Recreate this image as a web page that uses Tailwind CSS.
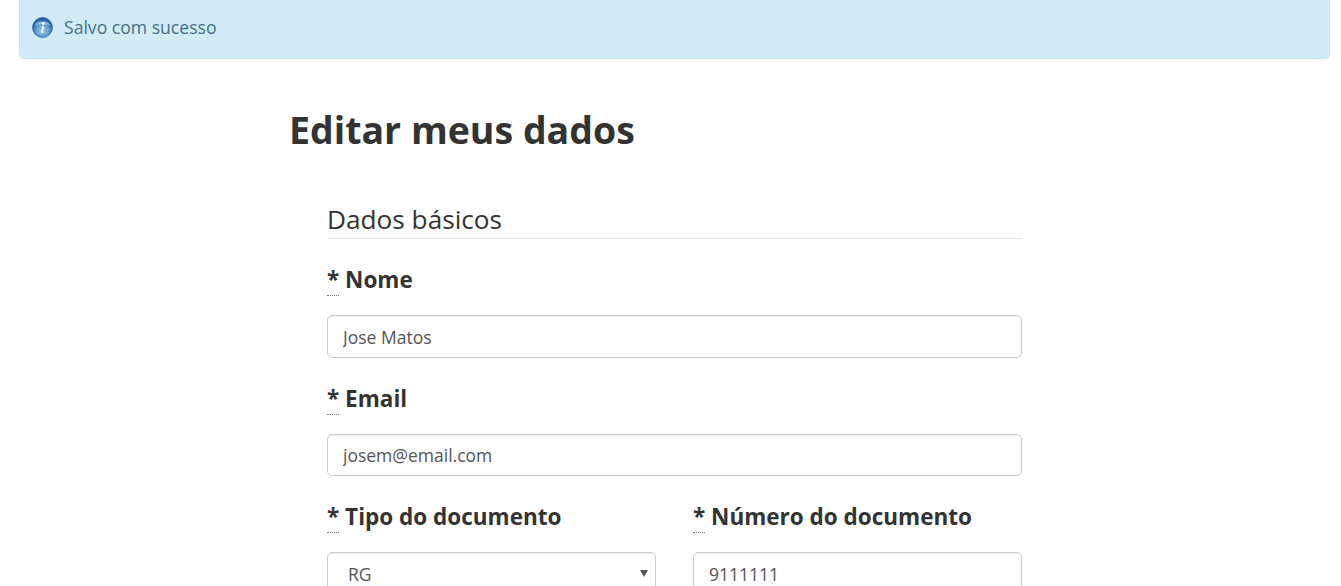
<!DOCTYPE html>
<html lang="pt">
<head>
<meta charset="utf-8">
<title>Editar meus dados</title>
<script src="https://cdn.jsdelivr.net/npm/@tailwindcss/browser@4"></script>
</head>
<body class="h-[586px] overflow-hidden bg-white font-['Open_Sans',sans-serif] text-[#333]">
<div class="ml-[19px] mr-[11px] flex h-[59px] items-center gap-[11px] rounded-b-[5px] border border-t-0 border-[#bce8f1] bg-[#d1ebf7] pl-[12px] pb-[3px] text-[17.6px] text-[#44708f]">
  <svg width="21" height="21" viewBox="0 0 21 21" class="shrink-0">
    <defs>
      <radialGradient id="g" cx="50%" cy="65%" r="60%"><stop offset="0" stop-color="#a5cdec"/><stop offset="0.55" stop-color="#5a9ad2"/><stop offset="1" stop-color="#1b5c9b"/></radialGradient>
    </defs>
    <circle cx="10.5" cy="10.5" r="10" fill="url(#g)" stroke="#2b6ca6" stroke-width=".8"/>
    <path d="M3 8.500C4.500 3 16.500 3 18 8.500 14 6.800 7 6.800 3 8.500Z" fill="#fff" fill-opacity=".4"/>
    <circle cx="11.300" cy="6.500" r="1.400" fill="#fff"/>
    <path d="M9.500 9.300h2.500l-1.100 5.700h1l-.3 1H9l1.100-5.700h-.9Z" fill="#fff"/>
  </svg>
  <span>Salvo com sucesso</span>
</div>
<main class="ml-[290px] w-[732px]">
  <h1 class="mt-[45px] -ml-px text-[37.5px] leading-[52px] font-bold">Editar meus dados</h1>
  <form class="mt-[45px] pl-[37px]">
    <h2 class="border-b border-[#e5e5e5] pb-[1px] text-[26.2px] leading-[36px]">Dados básicos</h2>
    <div class="mt-[25px] h-[118.5px]">
      <label class="block text-[22.5px] leading-[32px] font-bold"><abbr class="border-b border-dotted border-[#777] no-underline" title="obrigatório">*</abbr> Nome</label>
      <input value="Jose Matos" class="mt-[19px] block h-[42.5px] w-full rounded-[5px] border border-[#ccc] bg-white px-[15px] pt-px text-[17.5px] text-[#555] shadow-[inset_0_1px_1px_rgba(0,0,0,0.075)]">
    </div>
    <div class="h-[118.5px]">
      <label class="block text-[22.5px] leading-[32px] font-bold"><abbr class="border-b border-dotted border-[#777] no-underline" title="obrigatório">*</abbr> Email</label>
      <input value="josem@email.com" class="mt-[19px] block h-[42.5px] w-full rounded-[5px] border border-[#ccc] bg-white px-[15px] text-[17.5px] text-[#555] shadow-[inset_0_1px_1px_rgba(0,0,0,0.075)]">
    </div>
    <div class="grid grid-cols-2 gap-x-[37px]">
      <div>
        <label class="block text-[22.5px] leading-[32px] font-bold"><abbr class="border-b border-dotted border-[#777] no-underline" title="obrigatório">*</abbr> Tipo do documento</label>
        <div class="relative mt-[19px]">
          <select class="block h-[42.5px] w-full appearance-none rounded-[5px] border border-[#ccc] bg-white px-[20px] pt-px text-[17.5px] text-[#555] shadow-[inset_0_1px_1px_rgba(0,0,0,0.075)]"><option>RG</option></select>
          <span class="absolute right-[8px] top-[18px] h-0 w-0 border-x-[4px] border-t-[7px] border-x-transparent border-t-[#555]"></span>
        </div>
      </div>
      <div>
        <label class="block text-[22.5px] leading-[32px] font-bold"><abbr class="border-b border-dotted border-[#777] no-underline" title="obrigatório">*</abbr> Número do documento</label>
        <input value="9111111" class="mt-[19px] block h-[42.5px] w-full rounded-[5px] border border-[#ccc] bg-white px-[15px] pt-px text-[17.5px] text-[#555] shadow-[inset_0_1px_1px_rgba(0,0,0,0.075)]">
      </div>
    </div>
  </form>
</main>
</body>
</html>
